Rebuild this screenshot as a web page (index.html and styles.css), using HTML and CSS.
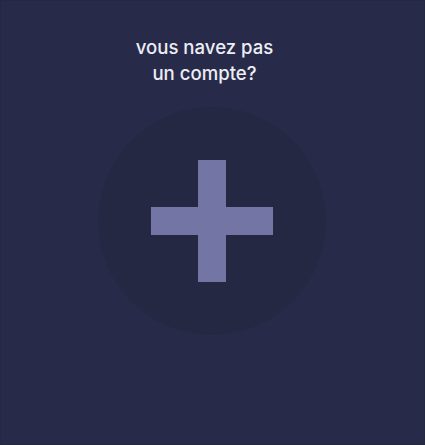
FILE: index.html
```html
<!DOCTYPE html>
<html>
<head>
<meta charset="utf-8">
<link rel="stylesheet" href="styles.css">
</head>
<body>
<div class="panel">
  <p class="title">vous navez pas<br>un compte?</p>
  <button class="add" type="button" aria-label="ajouter">
    <span class="plus"></span>
  </button>
</div>
</body>
</html>
```
FILE: styles.css
```css
html, body {
  margin: 0;
  padding: 0;
  background: #282a4a;
}
.panel {
  width: 425px;
  height: 445px;
  box-sizing: border-box;
  border: 1px solid #25283f;
  display: flex;
  flex-direction: column;
  align-items: center;
  padding-top: 33px;
}
.title {
  margin: 0 0 0 -16px;
  font-family: Inter, "Noto Sans", sans-serif;
  font-size: 18.6px;
  line-height: 26px;
  font-weight: 500;
  color: #ecedf5;
  text-align: center;
}
.add {
  margin-top: 21px;
  margin-left: -2px;
  width: 228px;
  height: 228px;
  border-radius: 50%;
  border: none;
  padding: 0;
  background: #252842;
  display: flex;
  align-items: center;
  justify-content: center;
}
.plus {
  position: relative;
  width: 122px;
  height: 122px;
  display: block;
}
.plus::before, .plus::after {
  content: "";
  position: absolute;
  background: #7375a5;
}
.plus::before {
  left: 47px;
  top: 0;
  width: 28px;
  height: 122px;
}
.plus::after {
  left: 0;
  top: 47px;
  width: 122px;
  height: 28px;
}
```
